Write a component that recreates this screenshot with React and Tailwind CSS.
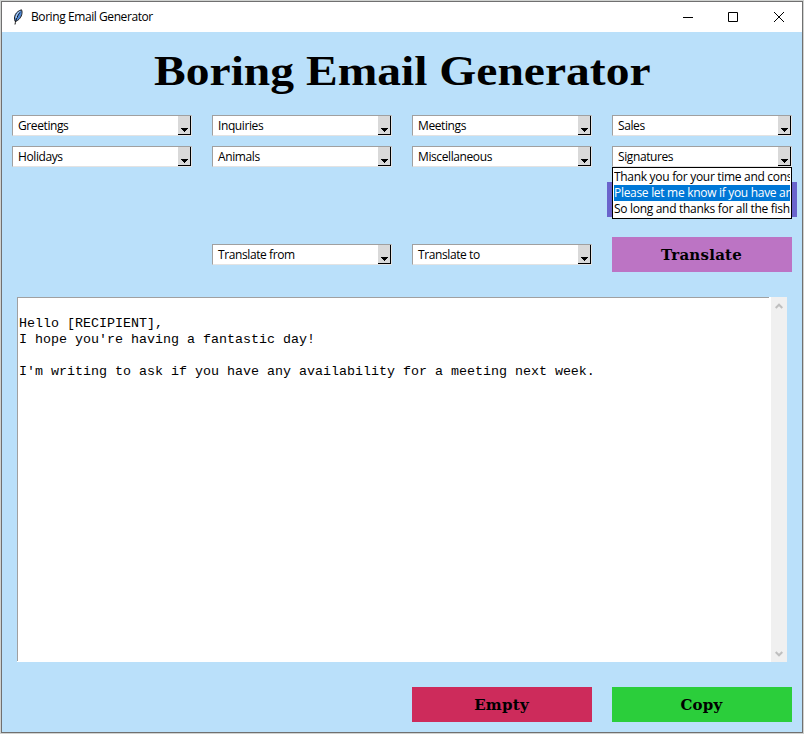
const sans = "font-['Open_Sans','Noto_Sans',sans-serif]";
const displaySerif = "font-['Liberation_Serif',serif]";
const buttonSerif = "font-['DejaVu_Serif',serif]";

function Combo({ label }) {
  return (
    <div className="flex h-[21px] w-[180px] border border-t-[#a0a0a0] border-l-[#a0a0a0] border-r-[#e3e3e3] border-b-[#e3e3e3] bg-white">
      <span className={`${sans} flex-1 pl-[5px] text-[12px] leading-[20px] tracking-[-0.4px] whitespace-nowrap`}>{label}</span>
      <span className="flex w-[13px] items-end justify-center border-r border-b border-black bg-[#d9d9d9] pb-[2px]">
        <svg width="7" height="4" viewBox="0 0 7 4" shapeRendering="crispEdges">
          <path d="M0 0h7v1H6v1H5v1H4v1H3V3H2V2H1V1H0z" />
        </svg>
      </span>
    </div>
  );
}

function Button({ label, color }) {
  return (
    <div className={`${buttonSerif} ${color} flex h-[35px] w-[180px] items-center justify-center pt-px pr-px text-[15px] font-bold tracking-[0.25px]`}>
      {label}
    </div>
  );
}

function TitleBar() {
  return (
    <div className="flex h-[30px] shrink-0 items-center bg-white">
      <svg className="ml-[10px]" width="12" height="16" viewBox="0 0 12 16">
        <path d="M3.200 12.500C1.200 8 3.500 2.500 9.500.8c1.400 3 0 7-2.500 9.500-1 1-2.200 1.900-3.800 2.200z" fill="#4f8ad8" stroke="#222" strokeWidth="1" />
        <path d="M8 3.500C6 6 4 9.500 3 15.500" fill="none" stroke="#111" strokeWidth="1" />
        <path d="M7.500 2.500C5.500 4 4.300 6.500 4 9" fill="none" stroke="#c8dcf4" strokeWidth="1" />
      </svg>
      <span className={`${sans} ml-[7px] flex-1 text-[12px] leading-[16px] tracking-[-0.42px]`}>Boring Email Generator</span>
      <svg width="10" height="10" viewBox="0 0 10 10" shapeRendering="crispEdges"><path d="M0 5h10v1H0z" /></svg>
      <svg className="ml-[35px]" width="10" height="10" viewBox="0 0 10 10"><path d="M.5.5h9v9h-9z" fill="none" stroke="#000" /></svg>
      <svg className="mr-[18px] ml-[36px]" width="10" height="10" viewBox="0 0 10 10"><path d="M0 0l10 10M10 0L0 10" stroke="#000" /></svg>
    </div>
  );
}

function Signatures() {
  return (
    <div className="relative">
      <Combo label="Signatures" />
      <div className={`${sans} absolute top-[21px] left-0 z-10 h-[52px] w-[180px] border border-black bg-white px-px pt-px text-[12px] leading-[16px] tracking-[-0.3px] whitespace-nowrap`}>
        <div className="h-4 overflow-hidden">Thank you for your time and consideration.</div>
        <div className="h-4 overflow-hidden bg-[#0078d7] text-white">Please let me know if you have any questions.</div>
        <div className="h-4 overflow-hidden">So long and thanks for all the fish</div>
      </div>
    </div>
  );
}

export default function App() {
  return (
    <div className="h-[734px] w-[804px] bg-[#d0d2d0] p-px text-black">
      <div className="flex h-[732px] w-[802px] flex-col border border-[#707070] bg-[#bae0fa]">
        <TitleBar />
        <h1 className={`${displaySerif} mt-[14px] h-[50px] text-center text-[42px] leading-[50px] font-bold whitespace-nowrap`}>
          <span className="inline-block scale-x-[1.132]">Boring Email Generator</span>
        </h1>
        <div className="mt-[19px] ml-[10px] grid grid-cols-[repeat(4,180px)] gap-x-5 gap-y-[10px]">
          <Combo label="Greetings" />
          <Combo label="Inquiries" />
          <Combo label="Meetings" />
          <Combo label="Sales" />
          <Combo label="Holidays" />
          <Combo label="Animals" />
          <Combo label="Miscellaneous" />
          <Signatures />
        </div>
        <div className="mt-[15px] ml-[605px] h-[35px] w-[190px] bg-[#6a64cc]" />
        <div className="mt-[20px] ml-[210px] flex h-[35px] items-center gap-5">
          <Combo label="Translate from" />
          <Combo label="Translate to" />
          <Button label="Translate" color="bg-[#bc74c4]" />
        </div>
        <div className="mt-[25px] ml-[15px] flex h-[365px] w-[770px] bg-white">
          <div className="mr-[2px] mb-px w-[752px] border-t border-l border-[#a0a0a0] pt-[2px] pl-px font-['Liberation_Mono',monospace] text-[13.333px] leading-[16px] whitespace-pre">
            {"\nHello [RECIPIENT],\nI hope you're having a fantastic day!\n\nI'm writing to ask if you have any availability for a meeting next week."}
          </div>
          <div className="flex w-4 flex-col items-center justify-between bg-[#f0f0f0] pt-[6px] pr-px pb-[5px]">
            <svg width="8" height="6" viewBox="0 0 8 6"><path d="M.7 5L4 1.700 7.300 5" fill="none" stroke="#bfbfbf" strokeWidth="2" /></svg>
            <svg width="8" height="6" viewBox="0 0 8 6"><path d="M.7 1L4 4.300 7.300 1" fill="none" stroke="#bfbfbf" strokeWidth="2" /></svg>
          </div>
        </div>
        <div className="mt-[25px] ml-[410px] flex gap-5">
          <Button label="Empty" color="bg-[#cd2b5b]" />
          <Button label="Copy" color="bg-[#2bce3b]" />
        </div>
      </div>
    </div>
  );
}
